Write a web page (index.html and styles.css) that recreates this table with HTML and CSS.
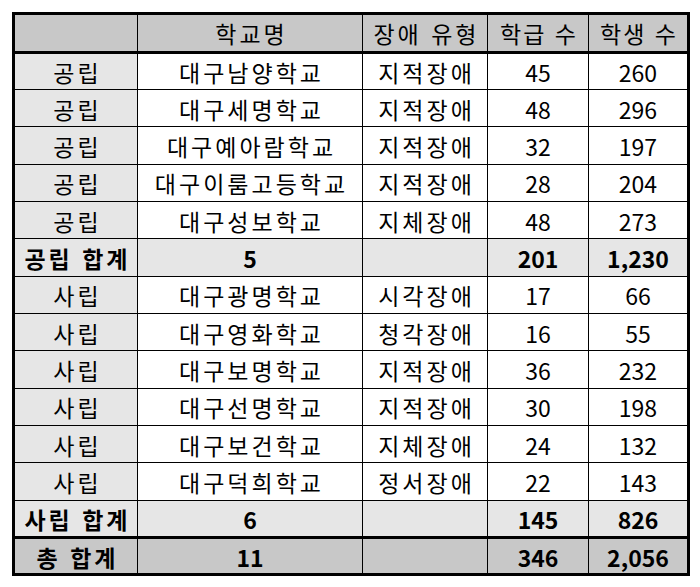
FILE: index.html
```html
<!DOCTYPE html>
<html lang="ko">
<head>
<meta charset="utf-8">
<title>대구 특수학교 현황</title>
<link rel="stylesheet" href="styles.css">
</head>
<body>
<table class="schools">
  <colgroup>
    <col class="c-type"><col class="c-name"><col class="c-dis"><col class="c-cls"><col class="c-stu">
  </colgroup>
  <thead>
    <tr class="head"><th></th><th>학교명</th><th>장애 유형</th><th>학급 수</th><th>학생 수</th></tr>
  </thead>
  <tbody>
    <tr><td class="kind">공립</td><td>대구남양학교</td><td>지적장애</td><td>45</td><td>260</td></tr>
    <tr><td class="kind">공립</td><td>대구세명학교</td><td>지적장애</td><td>48</td><td>296</td></tr>
    <tr><td class="kind">공립</td><td>대구예아람학교</td><td>지적장애</td><td>32</td><td>197</td></tr>
    <tr><td class="kind">공립</td><td>대구이룸고등학교</td><td>지적장애</td><td>28</td><td>204</td></tr>
    <tr><td class="kind">공립</td><td>대구성보학교</td><td>지체장애</td><td>48</td><td>273</td></tr>
    <tr class="sub"><td>공립 합계</td><td class="num">5</td><td></td><td>201</td><td>1,230</td></tr>
    <tr><td class="kind">사립</td><td>대구광명학교</td><td>시각장애</td><td>17</td><td>66</td></tr>
    <tr><td class="kind">사립</td><td>대구영화학교</td><td>청각장애</td><td>16</td><td>55</td></tr>
    <tr><td class="kind">사립</td><td>대구보명학교</td><td>지적장애</td><td>36</td><td>232</td></tr>
    <tr><td class="kind">사립</td><td>대구선명학교</td><td>지적장애</td><td>30</td><td>198</td></tr>
    <tr><td class="kind">사립</td><td>대구보건학교</td><td>지체장애</td><td>24</td><td>132</td></tr>
    <tr><td class="kind">사립</td><td>대구덕희학교</td><td>정서장애</td><td>22</td><td>143</td></tr>
    <tr class="sub"><td>사립 합계</td><td class="num">6</td><td></td><td>145</td><td>826</td></tr>
    <tr class="total"><td>총 합계</td><td class="num">11</td><td></td><td>346</td><td>2,056</td></tr>
  </tbody>
</table>
</body>
</html>
```

FILE: styles.css
```css
html, body {
  margin: 0;
  padding: 0;
  background: #ffffff;
}

body {
  padding: 12px 0 0 12px;
  font-family: "Noto Sans CJK KR", "Noto Sans", sans-serif;
  color: #000000;
}

.schools {
  border-collapse: collapse;
  table-layout: fixed;
  width: 677px;
  border: 3px solid #000000;
  font-size: 23px;
  line-height: 1;
}

.c-type { width: 124px; }
.c-name { width: 225px; }
.c-dis  { width: 125px; }
.c-cls  { width: 101px; }
.c-stu  { width: 100px; }

.schools th,
.schools td {
  border: 1.5px solid #000000;
  padding: 2px 0 0;
  text-align: center;
  vertical-align: middle;
  font-weight: normal;
  white-space: nowrap;
}

/* Hangul text is set a little loose, as in the source sheet */
.schools th,
.schools td:nth-child(-n+3) {
  letter-spacing: 3px;
  text-indent: 3px;
}

.schools th:nth-child(n+4) {
  letter-spacing: 2px;
  text-indent: 2px;
}

.schools td.num {
  letter-spacing: 0;
  text-indent: 0;
}

.schools tr { height: 37.35px; }
.schools .head { height: 38.5px; }

.schools th {
  background: #c8c8c8;
  border-bottom: 3px solid #000000;
}

.schools td { background: #ffffff; }
.schools td.kind { background: #e6e6e6; }

.schools .sub td {
  background: #e6e6e6;
  font-weight: bold;
}

.schools .total td {
  background: #c8c8c8;
  font-weight: bold;
  border-top: 3px solid #000000;
}
```
